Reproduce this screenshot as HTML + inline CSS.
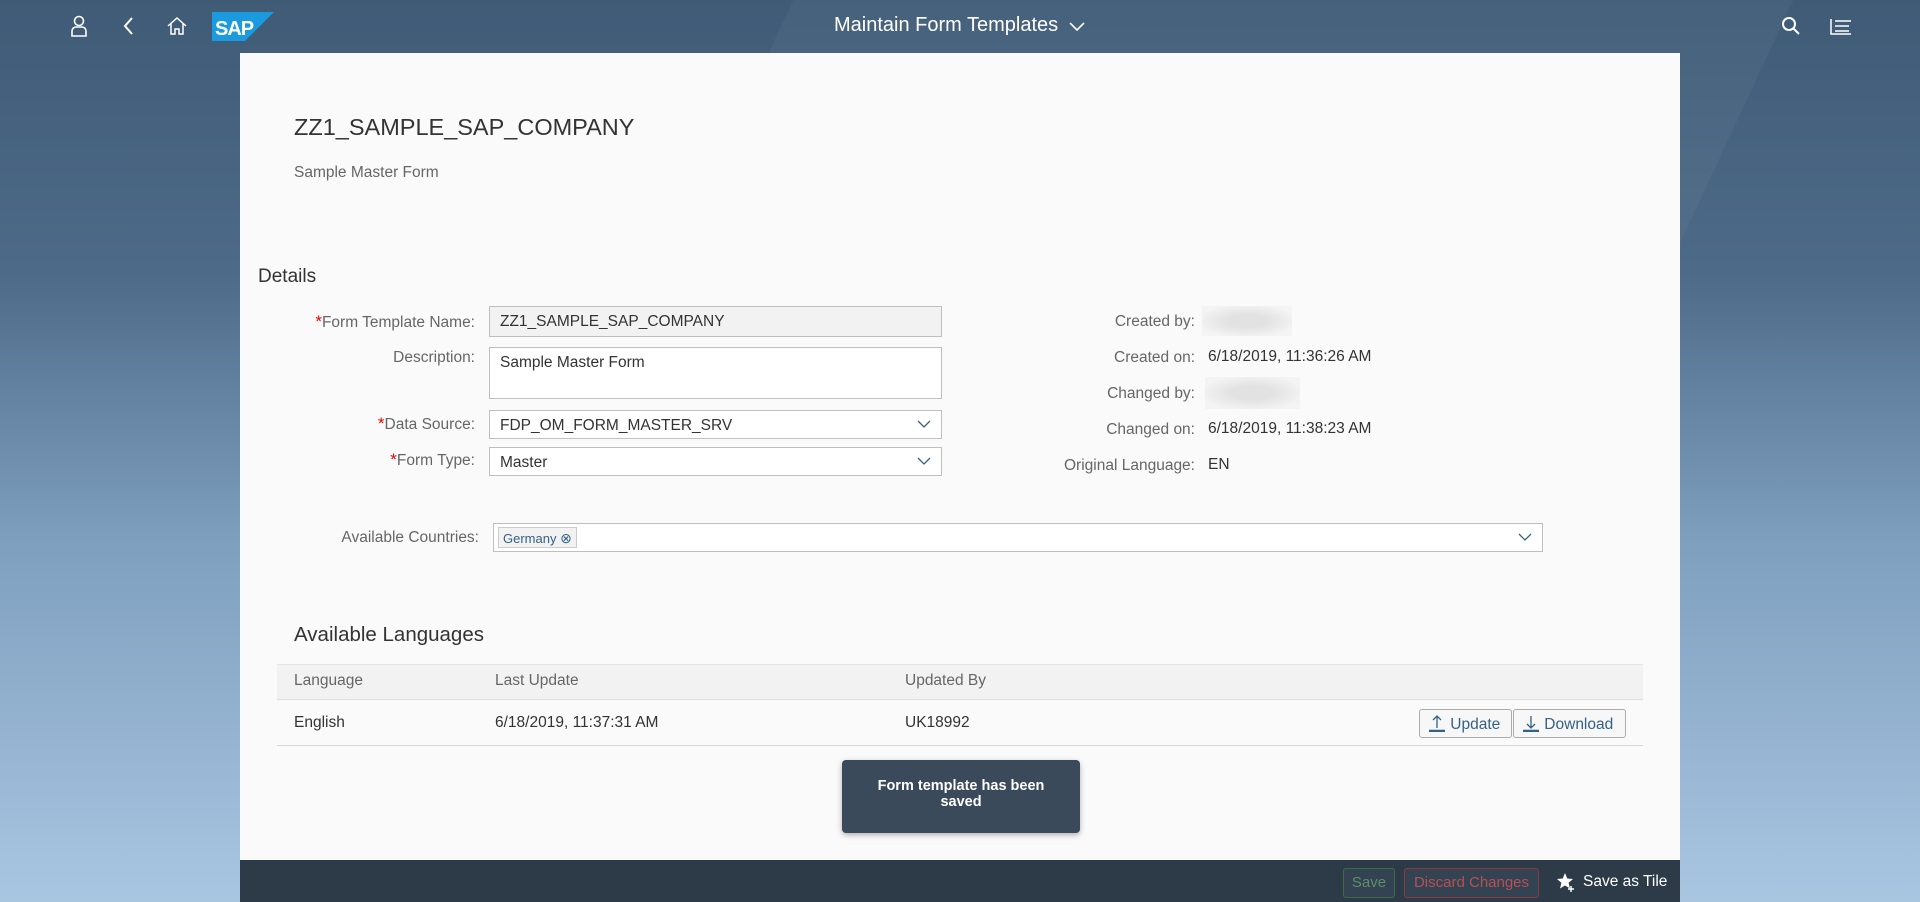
<!DOCTYPE html>
<html><head><meta charset="utf-8"><style>
*{box-sizing:border-box;margin:0;padding:0}
body{width:1920px;height:902px;overflow:hidden;font-family:"Liberation Sans",sans-serif;position:relative;
background:linear-gradient(180deg,#3f5b76 0%,#4d6a88 30%,#7f9fbf 60%,#a9c6e1 100%);}
.bgshape{position:absolute;left:700px;top:-200px;width:1000px;height:800px;background:rgba(255,255,255,0.04);transform:skewX(-25deg);}
.a{position:absolute;white-space:nowrap}
.panel{position:absolute;left:240px;top:53px;width:1440px;height:807px;background:#fafafa}
.lbl{position:absolute;font-size:15.5px;color:#666;text-align:right;white-space:nowrap}
.val{position:absolute;font-size:15.5px;color:#333;white-space:nowrap}
.inp{position:absolute;border:1px solid #bfbfbf;background:#fff;font-size:15.5px;color:#333;padding:6px 10px}
.req{color:#e00;font-size:17px}
.chev{position:absolute;right:10px;top:9px}
.btn{position:absolute;border:1px solid #ababab;border-radius:3px;background:#f7f7f7;color:#346187;font-size:15.5px;padding:4px 8px 0 8px}
</style></head><body>
<div class="bgshape"></div>
<svg class="a" style="left:70px;top:15px" width="18" height="22" viewBox="0 0 18 22" fill="none" stroke="#fff" stroke-width="1.6"><circle cx="9" cy="6" r="4.5"/><path d="M2 21v-5a4 4 0 0 1 4-4h6a4 4 0 0 1 4 4v5z"/></svg>
<svg class="a" style="left:122px;top:16px" width="12" height="20" viewBox="0 0 12 20" fill="none" stroke="#fff" stroke-width="2"><path d="M10 2L3 10l7 8"/></svg>
<svg class="a" style="left:167px;top:16px" width="20" height="19" viewBox="0 0 20 19" fill="none" stroke="#fff" stroke-width="1.5"><path d="M1 10L10 2l9 8M4 8v10h4v-5h4v5h4V8"/></svg>
<svg class="a" style="left:212px;top:12px" width="62" height="29" viewBox="0 0 62 29"><polygon points="0,0 62,0 33,29 0,29" fill="#1a9be0"/><text x="3" y="23" font-family="Liberation Sans" font-weight="bold" font-size="20" fill="#fff" letter-spacing="-1">SAP</text></svg>
<div class="a" style="left:834px;top:14px;font-size:20px;color:#fff">Maintain Form Templates</div>
<svg class="a" style="left:1069px;top:22px" width="16" height="10" viewBox="0 0 16 10" fill="none" stroke="#fff" stroke-width="1.6"><path d="M1 1l7 7 7-7"/></svg>
<svg class="a" style="left:1781px;top:16px" width="20" height="20" viewBox="0 0 20 20" fill="none" stroke="#fff" stroke-width="2"><circle cx="8" cy="8" r="6"/><path d="M12.5 12.5L18 18"/></svg>
<svg class="a" style="left:1830px;top:18px" width="22" height="17" viewBox="0 0 22 17" fill="none" stroke="#fff" stroke-width="1.5"><path d="M1 1v15h20M5 3h16M5 8h14M5 13h14"/></svg>

<div class="panel"></div>
<div class="a" style="left:294px;top:114px;font-size:23.5px;color:#333">ZZ1_SAMPLE_SAP_COMPANY</div>
<div class="a" style="left:294px;top:164px;font-size:15.5px;color:#666">Sample Master Form</div>
<div class="a" style="left:258px;top:266px;font-size:19px;color:#333">Details</div>

<div class="lbl" style="right:1445px;top:312px"><span class="req">*</span>Form Template Name:</div>
<div class="inp" style="left:489px;top:306px;width:453px;height:31px;background:#f2f2f2">ZZ1_SAMPLE_SAP_COMPANY</div>
<div class="lbl" style="right:1445px;top:349px">Description:</div>
<div class="inp" style="left:489px;top:347px;width:453px;height:52px">Sample Master Form</div>
<div class="lbl" style="right:1445px;top:414px"><span class="req">*</span>Data Source:</div>
<div class="inp" style="left:489px;top:410px;width:453px;height:29px">FDP_OM_FORM_MASTER_SRV<svg class="chev" width="14" height="9" viewBox="0 0 14 9" fill="none" stroke="#346187" stroke-width="1.3"><path d="M1 1l6 6 6-6"/></svg></div>
<div class="lbl" style="right:1445px;top:450px"><span class="req">*</span>Form Type:</div>
<div class="inp" style="left:489px;top:447px;width:453px;height:29px">Master<svg class="chev" width="14" height="9" viewBox="0 0 14 9" fill="none" stroke="#346187" stroke-width="1.3"><path d="M1 1l6 6 6-6"/></svg></div>

<div class="lbl" style="right:725px;top:313px">Created by:</div>
<div class="a" style="left:1202px;top:306px;width:90px;height:30px;background:radial-gradient(ellipse,#e2e2e2 30%,#f4f4f4 80%)"></div>
<div class="lbl" style="right:725px;top:349px">Created on:</div>
<div class="val" style="left:1208px;top:348px">6/18/2019, 11:36:26 AM</div>
<div class="lbl" style="right:725px;top:385px">Changed by:</div>
<div class="a" style="left:1205px;top:377px;width:95px;height:32px;background:radial-gradient(ellipse,#e2e2e2 30%,#f4f4f4 80%)"></div>
<div class="lbl" style="right:725px;top:421px">Changed on:</div>
<div class="val" style="left:1208px;top:420px">6/18/2019, 11:38:23 AM</div>
<div class="lbl" style="right:725px;top:457px">Original Language:</div>
<div class="val" style="left:1208px;top:456px">EN</div>

<div class="lbl" style="right:1441px;top:529px">Available Countries:</div>
<div class="inp" style="left:493px;top:523px;width:1050px;height:29px;padding:0">
<div class="a" style="left:4px;top:3px;height:21px;border:1px solid #ccc;background:#f2f2f2;color:#346187;font-size:13px;padding:2px 4px">Germany <span style="font-size:14px">⊗</span></div>
<svg class="chev" width="14" height="9" viewBox="0 0 14 9" fill="none" stroke="#346187" stroke-width="1.3"><path d="M1 1l6 6 6-6"/></svg></div>

<div class="a" style="left:294px;top:623px;font-size:20.5px;color:#333">Available Languages</div>
<div class="a" style="left:277px;top:664px;width:1366px;height:36px;background:#f2f2f2;border-top:1px solid #e5e5e5;border-bottom:1px solid #ddd"></div>
<div class="a" style="left:294px;top:672px;font-size:15.5px;color:#666">Language</div>
<div class="a" style="left:495px;top:672px;font-size:15.5px;color:#666">Last Update</div>
<div class="a" style="left:905px;top:672px;font-size:15.5px;color:#666">Updated By</div>
<div class="a" style="left:277px;top:745px;width:1366px;height:1px;background:#d9d9d9"></div>
<div class="a" style="left:294px;top:714px;font-size:15.5px;color:#333">English</div>
<div class="a" style="left:495px;top:714px;font-size:15.5px;color:#333">6/18/2019, 11:37:31 AM</div>
<div class="a" style="left:905px;top:714px;font-size:15.5px;color:#333">UK18992</div>
<div class="btn" style="left:1419px;top:709px;width:93px;height:29px"><svg width="18" height="18" viewBox="0 0 18 18" style="vertical-align:-3px" fill="none" stroke="#346187" stroke-width="1.3"><path d="M9 14V2M5 6l4-4 4 4"/><path d="M1 17h16" stroke-width="2.5"/></svg> Update</div>
<div class="btn" style="left:1513px;top:709px;width:113px;height:29px"><svg width="18" height="18" viewBox="0 0 18 18" style="vertical-align:-3px" fill="none" stroke="#346187" stroke-width="1.3"><path d="M9 2v12M5 10l4 4 4-4"/><path d="M1 17h16" stroke-width="2.5"/></svg> Download</div>

<div class="a" style="left:842px;top:760px;width:238px;height:73px;background:#3b4a5a;border-radius:4px;box-shadow:0 2px 6px rgba(0,0,0,.3);color:#fff;font-size:14.5px;font-weight:bold;text-align:center;white-space:normal;padding:18px 20px 0">Form template has been saved</div>

<div class="a" style="left:240px;top:860px;width:1440px;height:42px;background:#2d3a48"></div>
<div class="a" style="left:1343px;top:868px;width:52px;height:30px;border:1px solid #3d6b4a;border-radius:3px;color:#5e8d66;font-size:15px;padding-top:5px;text-align:center;background:#334352">Save</div>
<div class="a" style="left:1404px;top:868px;width:135px;height:30px;border:1px solid #8c3a40;border-radius:3px;color:#b85055;font-size:15px;padding-top:5px;text-align:center;background:#334352">Discard Changes</div>
<svg class="a" style="left:1556px;top:872px" width="20" height="20" viewBox="0 0 20 20"><polygon points="9,1 11.3,6.5 17,7 12.6,10.8 14,16.5 9,13.5 4,16.5 5.4,10.8 1,7 6.7,6.5" fill="#fff"/><path d="M15 14v6M12 17h6" stroke="#fff" stroke-width="1.5"/></svg>
<div class="a" style="left:1583px;top:873px;font-size:15.5px;color:#fff">Save as Tile</div>
</body></html>
